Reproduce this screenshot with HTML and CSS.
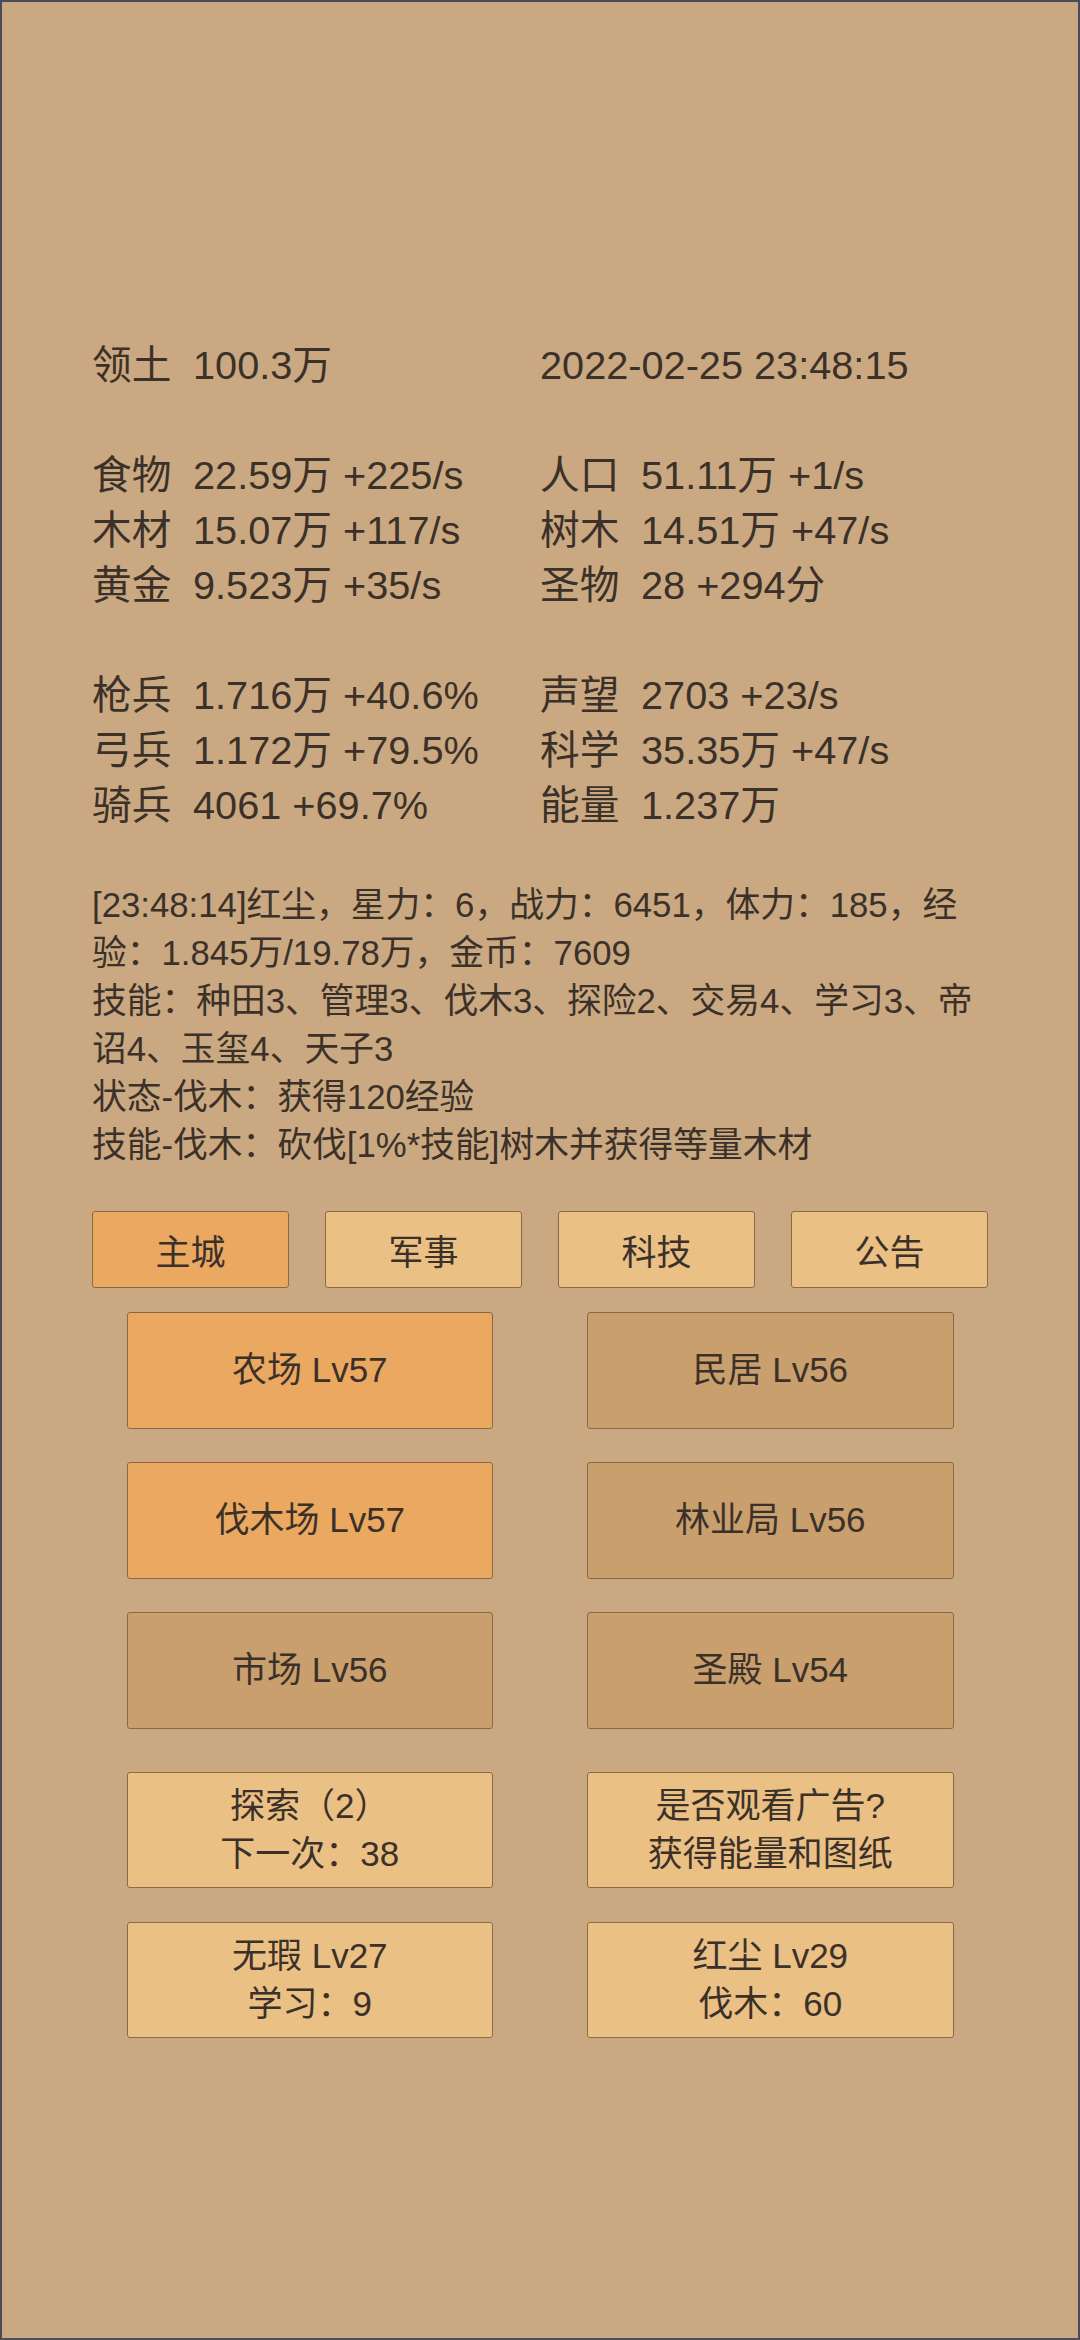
FILE: index.html
```html
<!DOCTYPE html>
<html lang="zh-CN">
<head>
<meta charset="utf-8">
<title>主城</title>
<link rel="stylesheet" href="styles.css">
</head>
<body>
<div class="page">
  <div class="container">
    <div class="stats">
      <div class="stat"><span class="k">领土</span><span class="v">100.3万</span></div>
      <div class="stat"><span class="v">2022-02-25 23:48:15</span></div>
    </div>
    <div class="stats gap">
      <div class="stat"><span class="k">食物</span><span class="v">22.59万 +225/s</span></div>
      <div class="stat"><span class="k">人口</span><span class="v">51.11万 +1/s</span></div>
      <div class="stat"><span class="k">木材</span><span class="v">15.07万 +117/s</span></div>
      <div class="stat"><span class="k">树木</span><span class="v">14.51万 +47/s</span></div>
      <div class="stat"><span class="k">黄金</span><span class="v">9.523万 +35/s</span></div>
      <div class="stat"><span class="k">圣物</span><span class="v">28 +294分</span></div>
    </div>
    <div class="stats gap">
      <div class="stat"><span class="k">枪兵</span><span class="v">1.716万 +40.6%</span></div>
      <div class="stat"><span class="k">声望</span><span class="v">2703 +23/s</span></div>
      <div class="stat"><span class="k">弓兵</span><span class="v">1.172万 +79.5%</span></div>
      <div class="stat"><span class="k">科学</span><span class="v">35.35万 +47/s</span></div>
      <div class="stat"><span class="k">骑兵</span><span class="v">4061 +69.7%</span></div>
      <div class="stat"><span class="k">能量</span><span class="v">1.237万</span></div>
    </div>
    <div class="log">
      <p>[23:48:14]红尘，星力：6，战力：6451，体力：185，经验：1.845万/19.78万，金币：7609</p>
      <p>技能：种田3、管理3、伐木3、探险2、交易4、学习3、帝诏4、玉玺4、天子3</p>
      <p>状态-伐木：获得120经验</p>
      <p>技能-伐木：砍伐[1%*技能]树木并获得等量木材</p>
    </div>
    <div class="tabs">
      <div class="tab active">主城</div>
      <div class="tab">军事</div>
      <div class="tab">科技</div>
      <div class="tab">公告</div>
    </div>
    <div class="grid">
      <div class="btn build active">农场 Lv57</div>
      <div class="btn build">民居 Lv56</div>
      <div class="btn build active">伐木场 Lv57</div>
      <div class="btn build">林业局 Lv56</div>
      <div class="btn build">市场 Lv56</div>
      <div class="btn build">圣殿 Lv54</div>
    </div>
    <div class="grid actions">
      <div class="btn light">探索（2）<br>下一次：38</div>
      <div class="btn light">是否观看广告?<br>获得能量和图纸</div>
      <div class="btn light">无瑕 Lv27<br>学习：9</div>
      <div class="btn light">红尘 Lv29<br>伐木：60</div>
    </div>
  </div>
</div>
</body>
</html>
```

FILE: styles.css
```css
html, body {
  margin: 0;
  padding: 0;
}
body {
  font-family: "Liberation Sans", "Noto Sans CJK SC", sans-serif;
  color: #3b3129;
  background: #caa982;
}
.page {
  box-sizing: border-box;
  width: 1080px;
  height: 2340px;
  border: 2px solid #4b4b5e;
  background: #caa982;
  overflow: hidden;
}
.container {
  width: 896px;
  margin: 0 auto;
  padding-top: 336px;
}
.stats {
  display: grid;
  grid-template-columns: 448px 448px;
  font-size: 39.7px;
  line-height: 55px;
}
.stats.gap {
  margin-top: 55px;
}
.stat {
  display: flex;
  white-space: nowrap;
}
.k {
  width: 101px;
  flex: none;
}
.log {
  margin-top: 48px;
  font-size: 34.75px;
  line-height: 48px;
}
.log p {
  margin: 0;
}
.tabs {
  margin-top: 42px;
  display: grid;
  grid-template-columns: repeat(4, 1fr);
  column-gap: 36px;
}
.tab {
  box-sizing: border-box;
  height: 77px;
  border: 1px solid #8a6a45;
  border-radius: 3px;
  background: #eac085;
  font-size: 35px;
  display: flex;
  align-items: center;
  justify-content: center;
}
.tab.active {
  background: #eba860;
}
.grid {
  margin-top: 24px;
  display: grid;
  grid-template-columns: 366.5px 366.5px;
  column-gap: 94px;
  row-gap: 33.4px;
  justify-content: center;
}
.grid.actions {
  margin-top: 43px;
}
.btn {
  box-sizing: border-box;
  height: 116.6px;
  border: 1px solid #8a6a45;
  border-radius: 3px;
  font-size: 35px;
  line-height: 48px;
  display: flex;
  align-items: center;
  justify-content: center;
  text-align: center;
}
.build {
  background: #c99f6e;
}
.build.active {
  background: #eba860;
}
.light {
  background: #eac085;
}
```
